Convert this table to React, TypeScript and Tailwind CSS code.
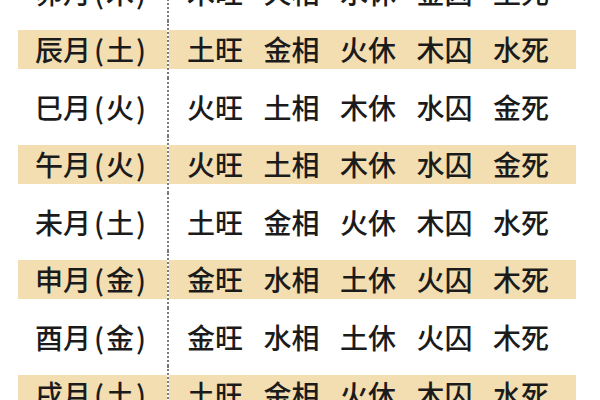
const rows = [
  { month: "卯月", el: "木", cells: ["木旺", "火相", "水休", "金囚", "土死"] },
  { month: "辰月", el: "土", cells: ["土旺", "金相", "火休", "木囚", "水死"] },
  { month: "巳月", el: "火", cells: ["火旺", "土相", "木休", "水囚", "金死"] },
  { month: "午月", el: "火", cells: ["火旺", "土相", "木休", "水囚", "金死"] },
  { month: "未月", el: "土", cells: ["土旺", "金相", "火休", "木囚", "水死"] },
  { month: "申月", el: "金", cells: ["金旺", "水相", "土休", "火囚", "木死"] },
  { month: "酉月", el: "金", cells: ["金旺", "水相", "土休", "火囚", "木死"] },
  { month: "戌月", el: "土", cells: ["土旺", "金相", "火休", "木囚", "水死"] },
];

export default function App() {
  return (
    <div
      className="w-[600px] h-[400px] overflow-hidden bg-white text-[#1b1b1b] text-[28px] font-medium leading-none"
      style={{ fontFamily: '"Noto Sans CJK SC", "Noto Sans", sans-serif' }}
    >
      <div className="-mt-[37px] flex flex-col">
        {rows.map((r, i) => {
          const shaded = i % 2 === 1;
          return (
            <div key={r.month} className="flex h-[57.5px] ml-[18px]">
              <div className="w-[149px] py-[9px]">
                <div className={`h-full flex items-center pl-[17px] ${shaded ? "bg-[#f3deb2]" : ""}`}>
                  <span>{r.month}</span>
                  <span className="ml-[3px]">(</span>
                  <span className="mx-[2px]">{r.el}</span>
                  <span>)</span>
                </div>
              </div>
              <div className="w-[409px] border-l-2 border-dotted border-[#7a7a7a] py-[9px]">
                <div className={`h-full flex items-center pl-[18px] ${shaded ? "bg-[#f3deb2]" : ""}`}>
                  {r.cells.map((c) => (
                    <span key={c} className="w-[76.5px] shrink-0">{c}</span>
                  ))}
                </div>
              </div>
            </div>
          );
        })}
      </div>
    </div>
  );
}
